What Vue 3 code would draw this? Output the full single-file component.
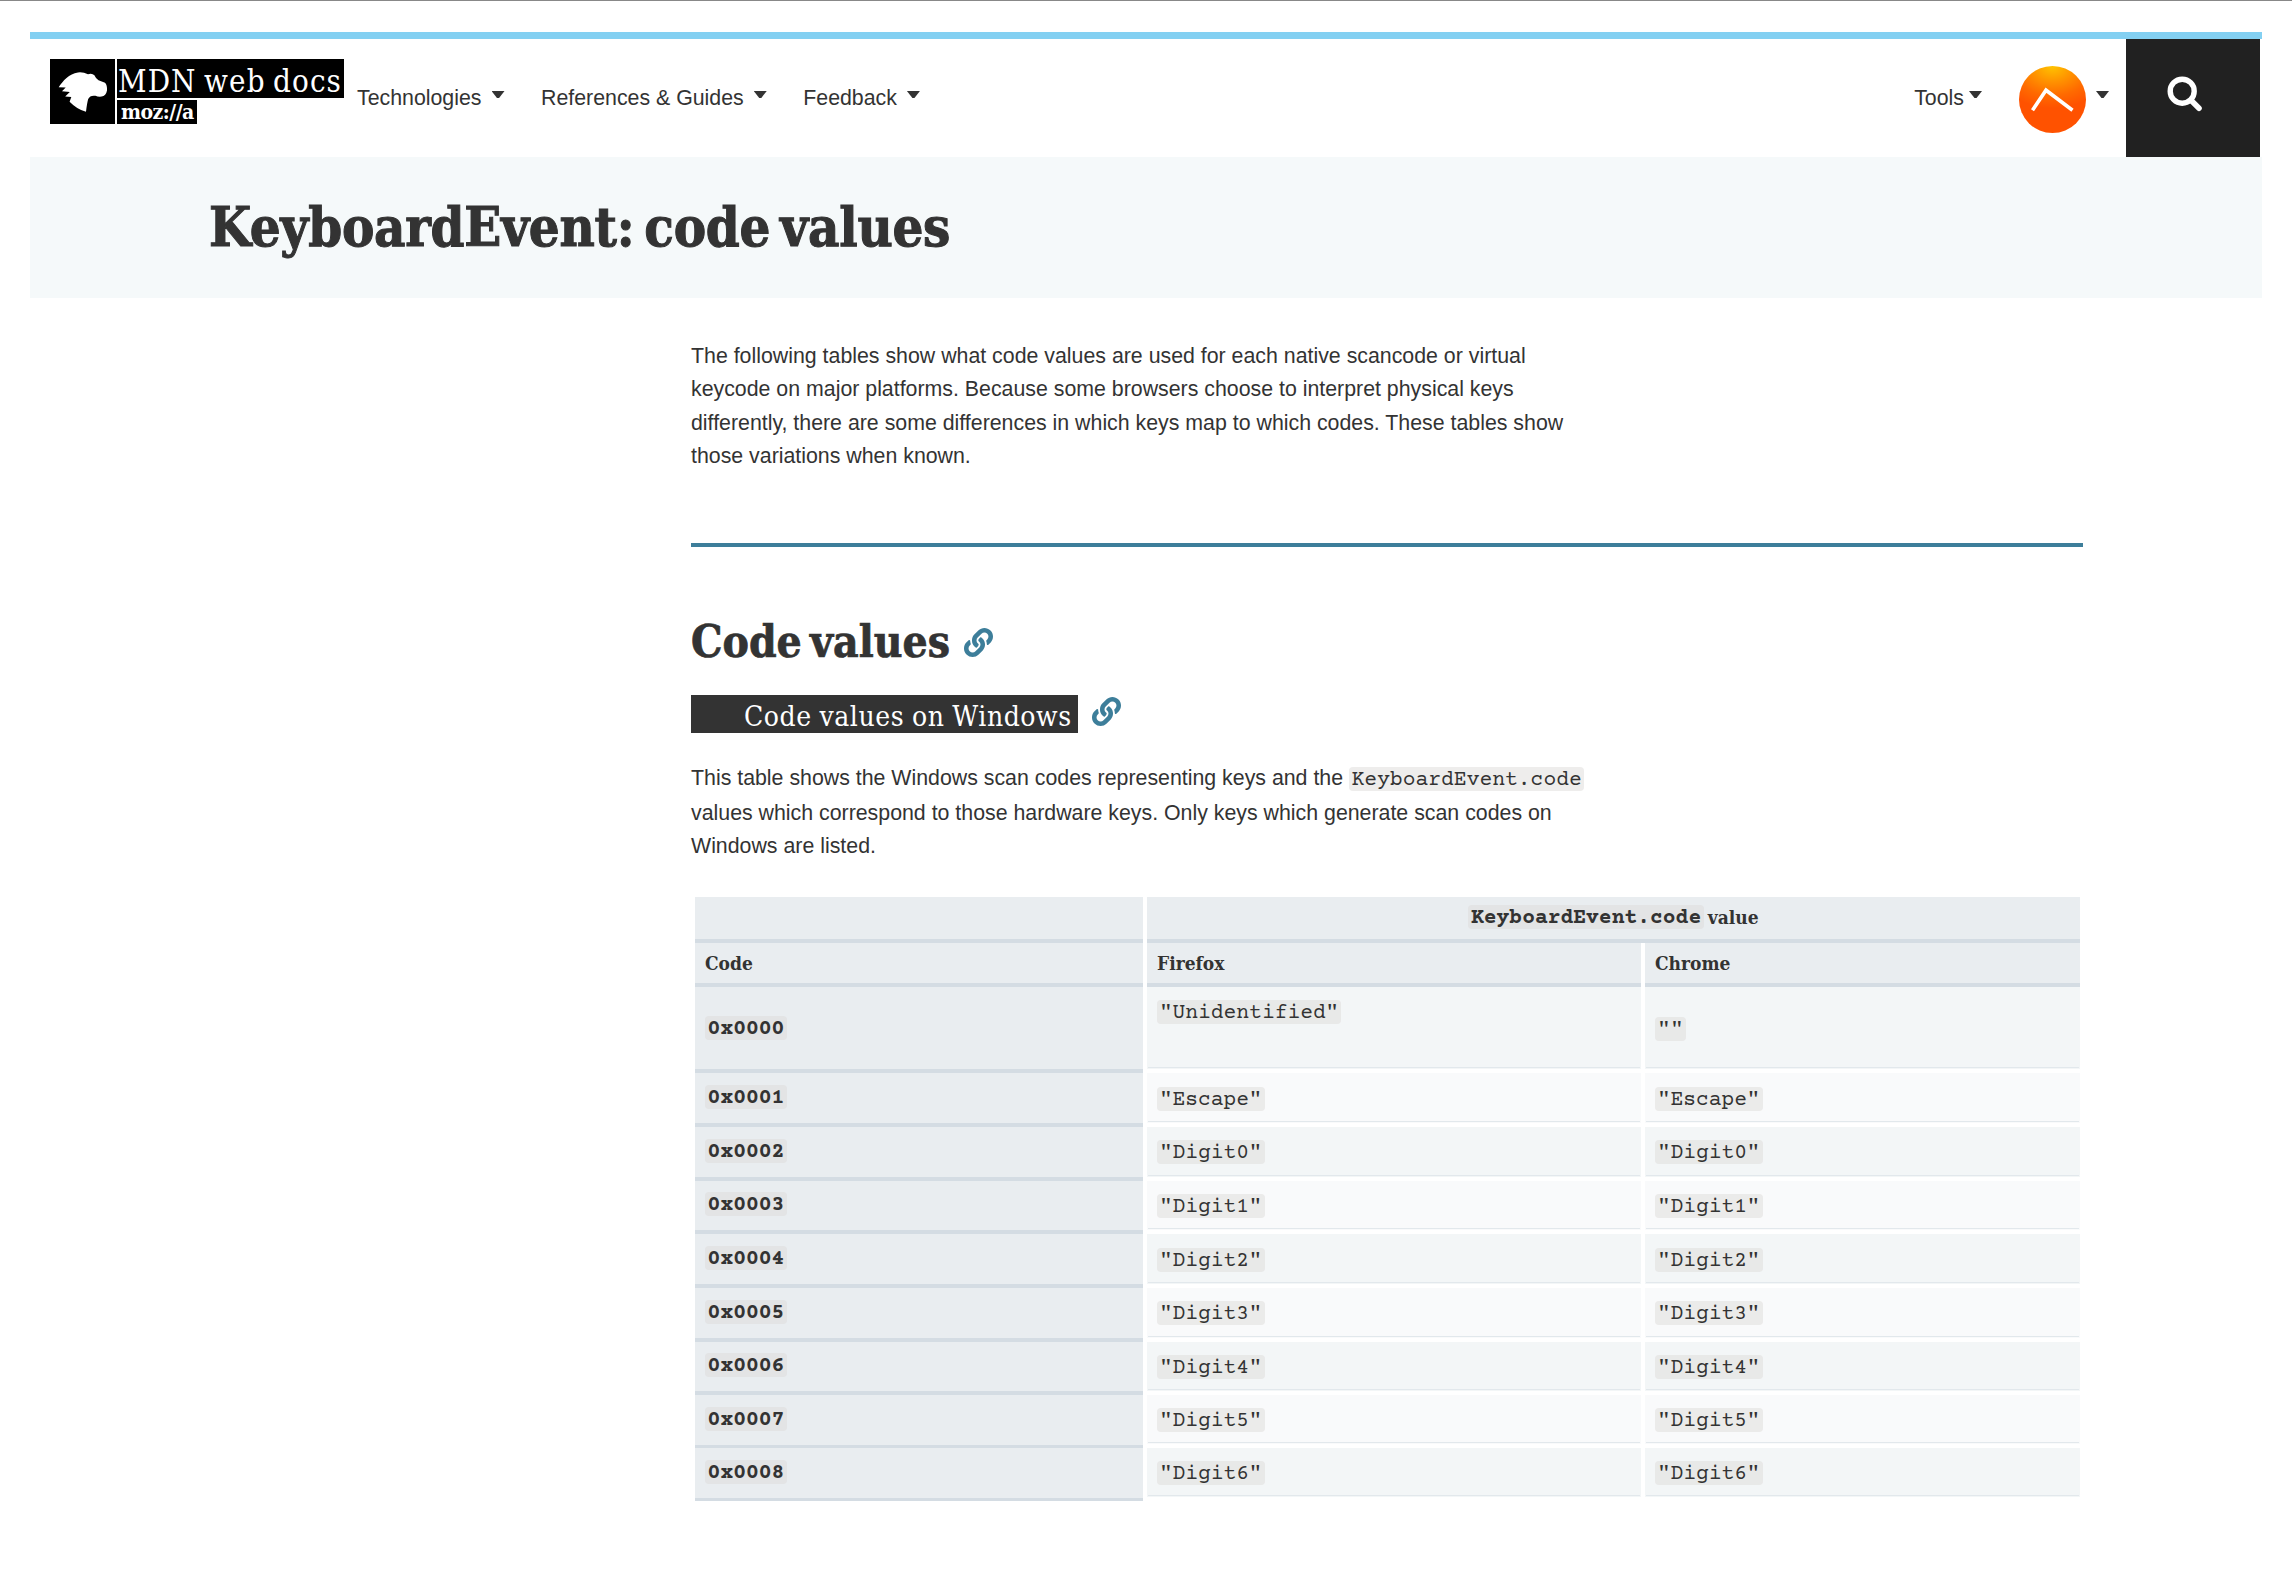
<script setup>
const menus = ['Technologies', 'References & Guides', 'Feedback']
const rows = [
  { code: '0x0000', firefox: '"Unidentified"', chrome: '""', tall: true },
  { code: '0x0001', firefox: '"Escape"', chrome: '"Escape"' },
  ...Array.from({ length: 7 }, (_, i) => ({
    code: `0x000${i + 2}`,
    firefox: `"Digit${i}"`,
    chrome: `"Digit${i}"`,
  })),
]
const linkPath =
  'M326.612 185.391c59.747 59.809 58.927 155.698.36 214.59-.11.12-.24.25-.36.37l-67.2 67.2c-59.27 59.27-155.699 59.262-214.96 0-59.27-59.26-59.27-155.7 0-214.96l37.106-37.106c9.84-9.84 26.786-3.3 27.294 10.606.648 17.722 3.826 35.527 9.69 52.721 1.986 5.822.567 12.262-3.783 16.612l-13.087 13.087c-28.026 28.026-28.905 73.66-1.155 101.96 28.024 28.579 74.086 28.749 102.325.51l67.2-67.19c28.191-28.191 28.073-73.757 0-101.83-3.701-3.694-7.429-6.564-10.341-8.569a16.037 16.037 0 0 1-6.947-12.606c-.396-10.567 3.348-21.456 11.698-29.806l21.054-21.055c5.521-5.521 14.182-6.199 20.584-1.731a152.482 152.482 0 0 1 20.522 17.197zM467.547 44.449c-59.261-59.262-155.69-59.27-214.96 0l-67.2 67.2c-.12.12-.25.25-.36.37-58.566 58.892-59.387 154.781.36 214.59a152.454 152.454 0 0 0 20.521 17.196c6.402 4.468 15.064 3.789 20.584-1.731l21.054-21.055c8.35-8.35 12.094-19.239 11.698-29.806a16.037 16.037 0 0 0-6.947-12.606c-2.912-2.005-6.64-4.875-10.341-8.569-28.073-28.073-28.191-73.639 0-101.83l67.2-67.19c28.239-28.239 74.3-28.069 102.325.51 27.75 28.3 26.872 73.934-1.155 101.96l-13.087 13.087c-4.35 4.35-5.769 10.79-3.783 16.612 5.864 17.194 9.042 34.999 9.69 52.721.509 13.906 17.454 20.446 27.294 10.606l37.106-37.106c59.271-59.259 59.271-155.699.001-214.959z'
</script>

<template>
  <div class="page">
    <header class="header">
      <a class="logo">
        <svg class="dino" viewBox="0 0 65 65">
          <rect width="65" height="65" fill="#000" />
          <path
            fill="#fff"
            d="M8.7 28.2C13 21.5 19 15 28 13.4Q33 12.8 38 15.2Q42 13.8 44.4 16.3Q46 20 48.5 21.2L55 23.8Q57.3 26 57 31.5Q56 36.8 51.5 37.6Q48 38 45.5 36.8Q40 36 38.2 40Q37 44 36 52.8Q27 50.5 19.6 42.8L21.3 38L15.2 37.6L19.8 33L12 32.2L15.7 28.4Z"
          />
        </svg>
        <span class="words">
          <span class="name">MDN web docs</span>
          <span class="moz">moz://a</span>
        </span>
      </a>
      <nav class="nav">
        <span v-for="m in menus" :key="m" class="item">{{ m }}<i class="caret" /></span>
      </nav>
      <div class="tools">Tools<i class="caret" /></div>
      <div class="account">
        <svg class="avatar" viewBox="0 0 67 67">
          <defs>
            <radialGradient id="sun" cx="0.5" cy="0" r="0.7" gradientTransform="translate(-0.1 0) scale(1.2 0.9)">
              <stop offset="0" stop-color="#ffc400" />
              <stop offset="0.35" stop-color="#ff9500" />
              <stop offset="0.7" stop-color="#ff6a00" />
              <stop offset="1" stop-color="#ff5200" />
            </radialGradient>
          </defs>
          <circle cx="33.5" cy="33.5" r="33.5" fill="url(#sun)" />
          <path d="M13.5 44.3L27 24.2L53.5 44.3" fill="none" stroke="#fff" stroke-width="3.6" />
        </svg>
        <i class="caret" />
      </div>
      <button class="search" aria-label="Search">
        <svg width="36" height="36" viewBox="0 0 36 36" fill="none" stroke="#fff">
          <circle cx="15.2" cy="15.2" r="12" stroke-width="5.4" />
          <path d="M24 24.2L32 32.2" stroke-width="5.6" stroke-linecap="round" />
        </svg>
      </button>
    </header>

    <div class="title-band"><h1>KeyboardEvent: code values</h1></div>

    <main class="content">
      <p class="intro">
        The following tables show what code values are used for each native scancode or virtual<br />
        keycode on major platforms. Because some browsers choose to interpret physical keys<br />
        differently, there are some differences in which keys map to which codes. These tables show<br />
        those variations when known.
      </p>
      <hr />
      <h2>
        <span>Code values</span>
        <svg class="link" viewBox="0 0 512 512"><path :d="linkPath" /></svg>
      </h2>
      <h3>
        <span>Code values on Windows</span>
        <svg class="link" viewBox="0 0 512 512"><path :d="linkPath" /></svg>
      </h3>
      <p class="about">
        <span class="first">This table shows the Windows scan codes representing keys and the <code>KeyboardEvent.code</code></span>
        values which correspond to those hardware keys. Only keys which generate scan codes on<br />
        Windows are listed.
      </p>

      <div class="table">
        <div class="row top">
          <div class="th" />
          <div class="th wide"><code>KeyboardEvent.code</code><span>value</span></div>
        </div>
        <div class="row names">
          <div class="th">Code</div>
          <div class="th">Firefox</div>
          <div class="th">Chrome</div>
        </div>
        <div v-for="r in rows" :key="r.code" class="row body" :class="{ tall: r.tall }">
          <div class="th"><code>{{ r.code }}</code></div>
          <div class="td firefox"><code>{{ r.firefox }}</code></div>
          <div class="td"><code>{{ r.chrome }}</code></div>
        </div>
      </div>
    </main>
  </div>
</template>

<style>
body {
  background: #fff;
}
</style>

<style scoped>
* {
  box-sizing: border-box;
}
.page {
  height: 1569px;
  overflow: hidden;
  padding: 31px 30px 0;
  border-top: 1px solid #888;
  background: #fff;
  color: #333;
  font: 21.333px/33.333px 'Liberation Sans', Arial, sans-serif;
}
.header {
  display: flex;
  height: 125px;
  border-top: 7px solid #83d0f2;
}
.logo {
  display: flex;
  gap: 2px;
  margin: 20px 0 0 20px;
  height: 65px;
}
.dino {
  width: 65px;
  height: 65px;
}
.words {
  display: flex;
  flex-direction: column;
  align-items: flex-start;
  gap: 2px;
  width: 227px;
  white-space: nowrap;
  color: #fff;
  font-family: 'DejaVu Serif Condensed', 'DejaVu Serif', serif;
}
.name {
  width: 227px;
  height: 39px;
  padding: 4px 0 0 1px;
  background: #000;
  font-size: 31px;
  line-height: 36px;
  letter-spacing: 1.1px;
  word-spacing: -2.5px;
}
.moz {
  width: 80px;
  height: 24px;
  padding-left: 4px;
  background: #000;
  font-size: 21px;
  font-weight: bold;
  line-height: 23px;
  letter-spacing: -0.5px;
}
.nav {
  display: flex;
  gap: 36.5px;
  margin-left: 13px;
  line-height: 118px;
}
.item {
  display: flex;
  gap: 10px;
  white-space: nowrap;
}
.caret {
  flex: none;
  width: 13px;
  height: 7px;
  margin-top: 52px;
  background: #333;
  clip-path: polygon(0 0, 100% 0, 58% 100%, 42% 100%);
}
.tools {
  display: flex;
  gap: 5px;
  margin-left: auto;
  line-height: 118px;
}
.account {
  display: flex;
  gap: 10px;
  margin: 0 17px 0 37px;
}
.avatar {
  width: 67px;
  height: 67px;
  margin-top: 27px;
}
.search {
  display: flex;
  align-items: flex-start;
  width: 134px;
  height: 118px;
  margin-right: 2px;
  padding: 37px 0 0 41px;
  border: 0;
  background: #212121;
}
.title-band {
  height: 141px;
  padding-left: 179px;
  background: #f5f9fa;
}
h1,
h2,
h3 {
  margin: 0;
  font-family: 'DejaVu Serif Condensed', 'DejaVu Serif', serif;
  white-space: nowrap;
}
h1 {
  font-size: 54px;
  line-height: 141px;
  letter-spacing: -0.3px;
  word-spacing: -6.5px;
  -webkit-text-stroke: 1px #333;
}
.content {
  width: 1392px;
  margin-left: 661px;
  padding-top: 42px;
}
p {
  margin: 0;
  white-space: nowrap;
}
hr {
  height: 4px;
  margin: 70px 0 0;
  border: 0;
  background: #3d7e9a;
}
h2 {
  display: flex;
  gap: 14px;
  height: 60px;
  margin-top: 65px;
  font-size: 44px;
  line-height: 60px;
  letter-spacing: 0;
  word-spacing: -5.5px;
  -webkit-text-stroke: 0.7px #333;
}
.link {
  width: 29px;
  height: 29px;
  fill: #3d7e9a;
  -webkit-text-stroke: 0;
}
h2 .link {
  margin-top: 16px;
}
h3 {
  display: flex;
  gap: 13.5px;
  margin-top: 23px;
  font-size: 28px;
  font-weight: normal;
  line-height: 35px;
  letter-spacing: 0.55px;
  word-spacing: -0.7px;
}
h3 span {
  width: 387px;
  height: 38px;
  padding: 4px 0 0 53px;
  background: #333;
  color: #fff;
}
h3 .link {
  margin-top: 2px;
}
.about {
  margin-top: 29px;
}
.first {
  display: block;
  height: 34.3px;
}
code {
  display: inline-block;
  height: 24px;
  padding: 3px 2.6px 0;
  border-radius: 4px;
  background: rgba(221, 219, 218, 0.5);
  font-family: 'Courier Prime', Courier, 'Liberation Mono', monospace;
  font-size: 21.333px;
  line-height: 21px;
  letter-spacing: 0;
}
.table {
  margin: 34px 0 0 4px;
  width: 1385px;
}
.row {
  display: grid;
  grid-template-columns: 448px 494px 435px;
  column-gap: 4px;
}
.top {
  height: 46px;
}
.names {
  height: 44px;
}
.body {
  height: 53.67px;
}
.body.tall {
  height: 86px;
}
.body:nth-last-child(-n + 2) {
  height: 53px;
}
.th {
  display: flex;
  align-items: center;
  padding: 0 10px;
  border-bottom: 4px solid #d4dce3;
  background: #e9edf0;
  font-family: 'DejaVu Serif Condensed', 'DejaVu Serif', serif;
  font-size: 19px;
  font-weight: bold;
  line-height: 24px;
}
.th.wide {
  grid-column: 2 / 4;
  justify-content: center;
  align-items: flex-start;
  gap: 4px;
  padding-top: 8px;
}
.td {
  display: flex;
  align-items: center;
  margin-bottom: 4px;
  padding: 1px 10px 0;
  background: linear-gradient(#e2e8ec, #e2e8ec) center calc(100% - 1px) / calc(100% - 2px) 1px no-repeat #f9fafb;
}
.body:nth-child(odd) .td {
  background-color: #f3f6f7;
}
.body .th {
  padding-bottom: 2px;
}
.body:nth-last-child(-n + 2) .th {
  border-bottom-width: 3px;
}
.tall .th {
  padding-bottom: 0;
}
.tall .firefox {
  align-items: flex-start;
  padding-top: 13px;
}
</style>
